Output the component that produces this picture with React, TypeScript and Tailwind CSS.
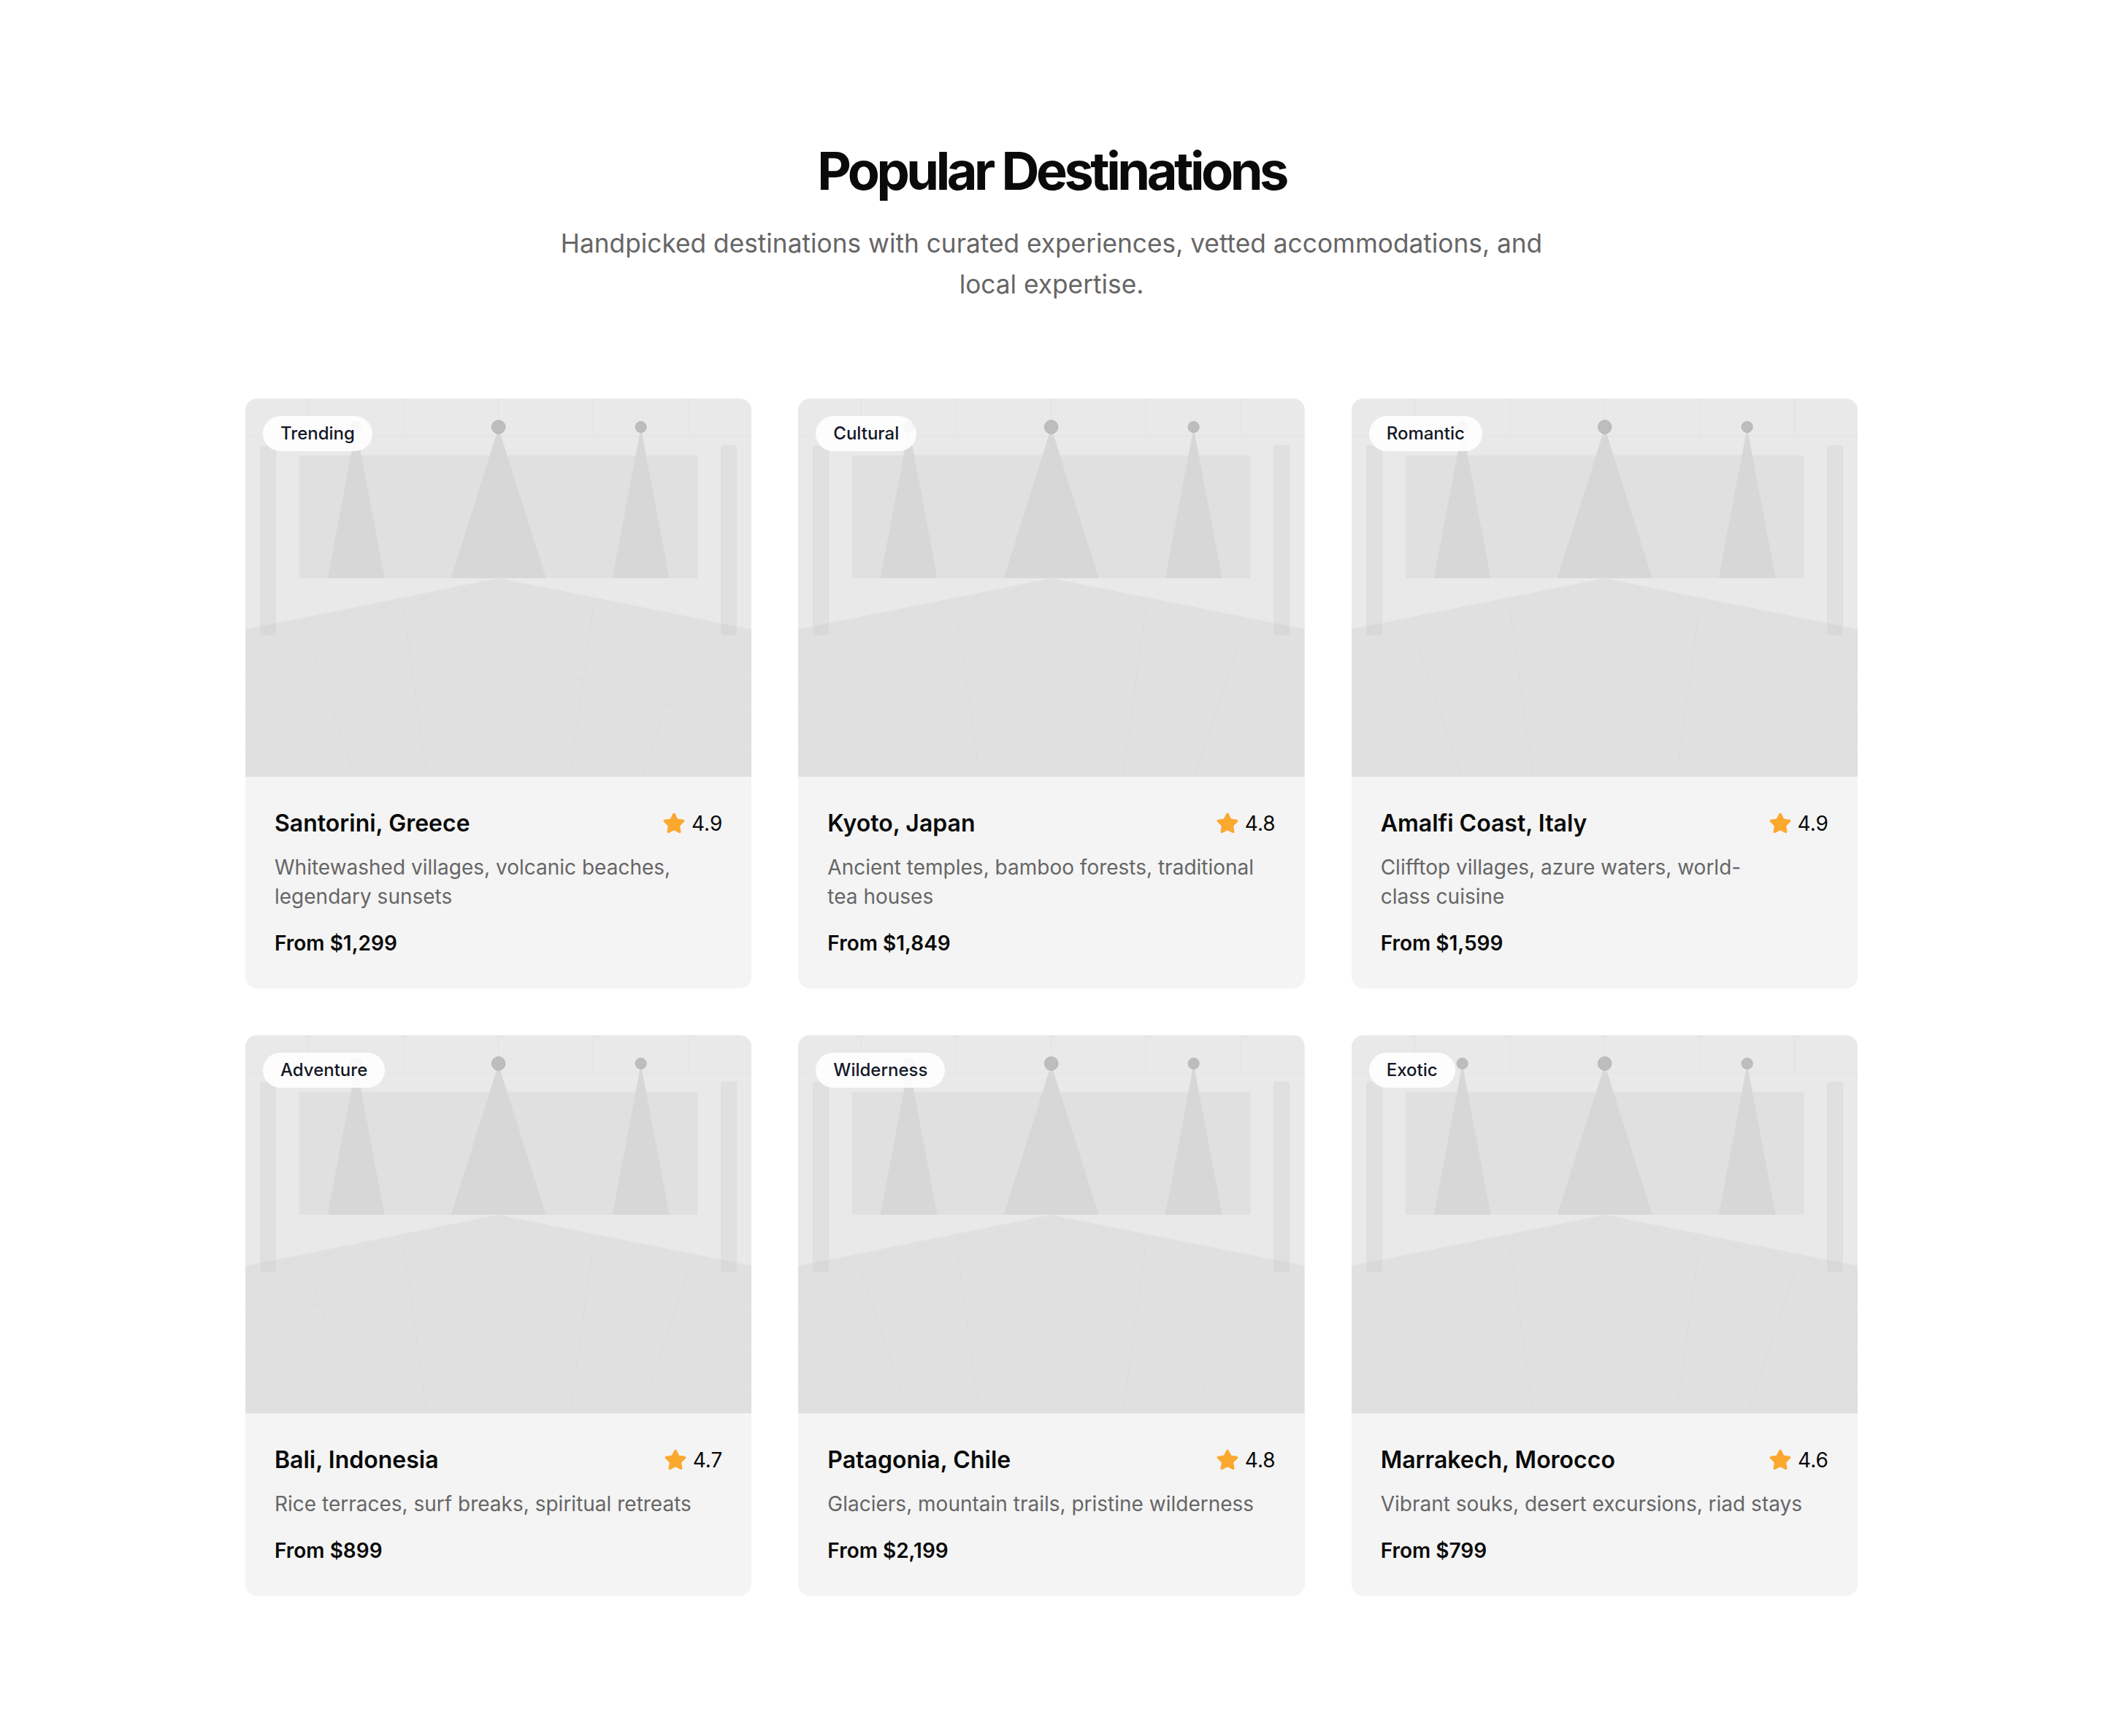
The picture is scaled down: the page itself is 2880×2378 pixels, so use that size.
import { Star } from "lucide-react"

const destinations = [
    { id: 1, tag: "Trending", name: "Santorini, Greece", rating: "4.9", text: "Whitewashed villages, volcanic beaches, legendary sunsets", price: "From $1,299" },
    { id: 2, tag: "Cultural", name: "Kyoto, Japan", rating: "4.8", text: "Ancient temples, bamboo forests, traditional tea houses", price: "From $1,849" },
    { id: 3, tag: "Romantic", name: "Amalfi Coast, Italy", rating: "4.9", text: "Clifftop villages, azure waters, world-class cuisine", price: "From $1,599" },
    { id: 4, tag: "Adventure", name: "Bali, Indonesia", rating: "4.7", text: "Rice terraces, surf breaks, spiritual retreats", price: "From $899" },
    { id: 5, tag: "Wilderness", name: "Patagonia, Chile", rating: "4.8", text: "Glaciers, mountain trails, pristine wilderness", price: "From $2,199" },
    { id: 6, tag: "Exotic", name: "Marrakech, Morocco", rating: "4.6", text: "Vibrant souks, desert excursions, riad stays", price: "From $799" },
]

// placeholder "room" drawing used for every card
function Placeholder() {
    return (
        <svg viewBox="0 0 400 300" preserveAspectRatio="none" className="block h-[518px] w-full">
            <rect width="400" height="300" fill="#e9e9e9" />
            {[50, 125, 200, 275, 350].map((x) => (
                <line key={x} x1={x} y1="0" x2={x} y2="30" stroke="#e2e2e2" strokeWidth="0.6" />
            ))}
            <line x1="0" y1="30" x2="400" y2="30" stroke="#e3e3e3" strokeWidth="0.6" />
            <rect x="42.5" y="45" width="315" height="97.5" rx="1.5" fill="#e0e0e0" />
            <polygon points="87.5,23 65,142.5 110,142.5" fill="#d7d7d7" />
            <polygon points="200,23 162.5,142.5 237.5,142.5" fill="#d7d7d7" />
            <polygon points="312.5,23 290,142.5 335,142.5" fill="#d7d7d7" />
            <polygon points="0,183 200,142.5 400,183 400,300 0,300" fill="#e0e0e0" />
            {[218, 248, 278].map((y) => (
                <line key={y} x1="0" y1={y} x2="400" y2={y} stroke="#e4e4e4" strokeWidth="0.5" />
            ))}
            <line x1="50" y1="187.5" x2="86.7" y2="300" stroke="#dadada" strokeWidth="0.4" />
            <line x1="125" y1="165" x2="143.4" y2="300" stroke="#dadada" strokeWidth="0.4" />
            <line x1="275" y1="165" x2="256.6" y2="300" stroke="#dadada" strokeWidth="0.4" />
            <line x1="350" y1="187.5" x2="313.3" y2="300" stroke="#dadada" strokeWidth="0.4" />
            <rect x="12" y="37.5" width="12" height="150" rx="1" fill="#000" fillOpacity="0.035" stroke="#d8d8d8" strokeWidth="0.3" />
            <rect x="376" y="37.5" width="12" height="150" rx="1" fill="#000" fillOpacity="0.035" stroke="#d8d8d8" strokeWidth="0.3" />
            <circle cx="87.5" cy="22.5" r="4.4" fill="#bdbdbd" stroke="#adadad" strokeWidth="0.4" />
            <circle cx="200" cy="22.5" r="5.4" fill="#bdbdbd" stroke="#adadad" strokeWidth="0.4" />
            <circle cx="312.5" cy="22.5" r="4.4" fill="#bdbdbd" stroke="#adadad" strokeWidth="0.4" />
        </svg>
    )
}

function DestinationCard({ tag, name, rating, text, price }: typeof destinations[number]) {
    return (
        <div className="flex flex-col overflow-hidden rounded-2xl bg-[#f4f4f4]">
            <div className="relative">
                <Placeholder />
                <span className="absolute left-6 top-6 rounded-full bg-white/90 px-6 py-2 text-[24px] leading-[32px] font-medium text-[#141827]">
                    {tag}
                </span>
            </div>
            <div className="px-10 pt-10 pb-[42px]">
                <div className="flex items-center justify-between">
                    <h3 className="text-[32px] leading-[48px] font-semibold text-[#0a0a0a]">{name}</h3>
                    <div className="flex items-center gap-2">
                        <Star size={32} className="text-[#fba82f]" fill="currentColor" strokeWidth={1.5} />
                        <span className="text-[28px] leading-[40px] text-[#0a0a0a]">{rating}</span>
                    </div>
                </div>
                <p className="mt-4 text-[28px] leading-[40px] text-pretty text-[#666666]">{text}</p>
                <p className="mt-6 text-[28px] leading-[40px] font-semibold text-[#0a0a0a]">{price}</p>
            </div>
        </div>
    )
}

export default function App() {
    return (
        <div className="min-h-screen bg-white font-[Inter,sans-serif]">
            <section className="mx-auto max-w-[2304px] px-12 pt-[194px] pb-48">
                <h2 className="text-center text-[72px] leading-[80px] font-bold tracking-[-0.062em] text-[#0a0a0a]">
                    Popular Destinations
                </h2>
                <p className="mx-auto mt-8 max-w-[1400px] text-center text-[35.25px] leading-[56px] text-[#666666]">
                    Handpicked destinations with curated experiences, vetted accommodations, and local expertise.
                </p>
                <div className="mt-32 grid grid-cols-3 gap-16">
                    {destinations.map((d) => (
                        <DestinationCard key={d.id} {...d} />
                    ))}
                </div>
            </section>
        </div>
    )
}
